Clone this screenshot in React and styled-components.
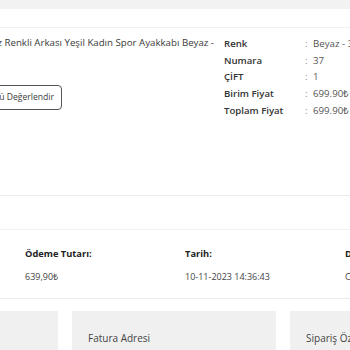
import React from 'react'
import styled, { createGlobalStyle } from 'styled-components'

const GlobalStyle = createGlobalStyle`
  html, body {
    margin: 0;
    padding: 0;
    background: #ffffff;
    font-family: 'Open Sans', 'Liberation Sans', sans-serif;
    color: #333333;
    overflow: hidden;
  }
`

const details = [
  { label: 'Renk', value: 'Beyaz - 37' },
  { label: 'Numara', value: '37' },
  { label: 'ÇİFT', value: '1' },
  { label: 'Birim Fiyat', value: '699.90₺' },
  { label: 'Toplam Fiyat', value: '699.90₺' },
]

const payment = [
  { title: 'Ödeme Tutarı:', value: '639,90₺' },
  { title: 'Tarih:', value: '10-11-2023 14:36:43' },
  { title: 'Durum:', value: 'Cüzdan' },
]

const boxes = ['Teslimat Adresi', 'Fatura Adresi', 'Sipariş Özeti']

export default function App() {
  return (
    <Page>
      <GlobalStyle />
      <TopStrip />
      <ProductCard>
        <CardHead />
        <ProductBody>
          <LeftCol>
            <NameRow>
              <Name>Beyaz Renkli Arkası Yeşil Kadın Spor Ayakkabı Beyaz -</Name>
            </NameRow>
            <ButtonRow>
              <RateButton>Ürünü Değerlendir</RateButton>
            </ButtonRow>
          </LeftCol>
          <DetailTable>
            {details.map((d) => (
              <React.Fragment key={d.label}>
                <DetailLabel>{d.label}</DetailLabel>
                <Colon>:</Colon>
                <DetailValue>{d.value}</DetailValue>
              </React.Fragment>
            ))}
          </DetailTable>
        </ProductBody>
      </ProductCard>

      <PaymentCard>
        {payment.map((p) => (
          <PayCol key={p.title}>
            <PayTitle>{p.title}</PayTitle>
            <PayValue>{p.value}</PayValue>
          </PayCol>
        ))}
      </PaymentCard>

      <BoxRow>
        {boxes.map((b) => (
          <InfoBox key={b}>
            <BoxTitle>{b}</BoxTitle>
          </InfoBox>
        ))}
      </BoxRow>
    </Page>
  )
}

const Page = styled.div`
  width: 350px;
  height: 350px;
  overflow: hidden;
  display: flex;
  flex-direction: column;
`

const TopStrip = styled.div`
  height: 9px;
  background: #f2f2f2;
  flex-shrink: 0;
`

const ProductCard = styled.div`
  background: #ffffff;
  border-bottom: 1px solid #ececec;
  height: 186px;
  flex-shrink: 0;
`

const CardHead = styled.div`
  height: 18px;
  border-bottom: 1px solid #f0f0f0;
`

const ProductBody = styled.div`
  display: flex;
  padding-top: 7px;
`

const LeftCol = styled.div`
  width: 224px;
  flex-shrink: 0;
  display: flex;
  flex-direction: column;
`

const NameRow = styled.div`
  width: 214px;
  display: flex;
  justify-content: flex-end;
`

const Name = styled.span`
  white-space: nowrap;
  font-size: 9.7px;
  line-height: 16.7px;
  color: #3a3a3a;
`

const ButtonRow = styled.div`
  width: 62px;
  display: flex;
  justify-content: flex-end;
  margin-top: 33px;
`

const RateButton = styled.button`
  flex-shrink: 0;
  height: 25px;
  padding: 0 7px 0 9px;
  border: 1px solid #555555;
  border-radius: 4px;
  background: #ffffff;
  font-family: 'Open Sans', 'Liberation Sans', sans-serif;
  font-size: 8.6px;
  color: #3a3a3a;
  white-space: nowrap;
`

const DetailTable = styled.div`
  display: grid;
  grid-template-columns: 81px 8px auto;
  grid-auto-rows: 16.7px;
  align-items: center;
  white-space: nowrap;
  font-size: 9.7px;
`

const DetailLabel = styled.span`
  font-weight: 600;
  font-size: 9.6px;
  color: #333333;
`

const Colon = styled.span`
  color: #888888;
`

const DetailValue = styled.span`
  color: #555555;
`

const PaymentCard = styled.div`
  margin-top: 33px;
  border-top: 1px solid #f2f2f2;
  border-bottom: 1px solid #ececec;
  height: 70px;
  flex-shrink: 0;
  display: grid;
  grid-template-columns: repeat(3, 160px);
  padding-left: 25px;
  box-sizing: border-box;
`

const PayCol = styled.div`
  display: flex;
  flex-direction: column;
  padding-top: 16px;
  gap: 8px;
  white-space: nowrap;
`

const PayTitle = styled.span`
  font-size: 9.3px;
  font-weight: 700;
  color: #222222;
  line-height: 15px;
`

const PayValue = styled.span`
  font-size: 9px;
  color: #444444;
  line-height: 15px;
`

const BoxRow = styled.div`
  display: flex;
  gap: 14px;
  margin-top: 12px;
  margin-left: -146px;
  flex-shrink: 0;
`

const InfoBox = styled.div`
  width: 204px;
  height: 60px;
  flex-shrink: 0;
  background: #f0f0f0;
  padding: 14px 16px;
  box-sizing: border-box;
`

const BoxTitle = styled.span`
  font-size: 10px;
  color: #444444;
  white-space: nowrap;
`
